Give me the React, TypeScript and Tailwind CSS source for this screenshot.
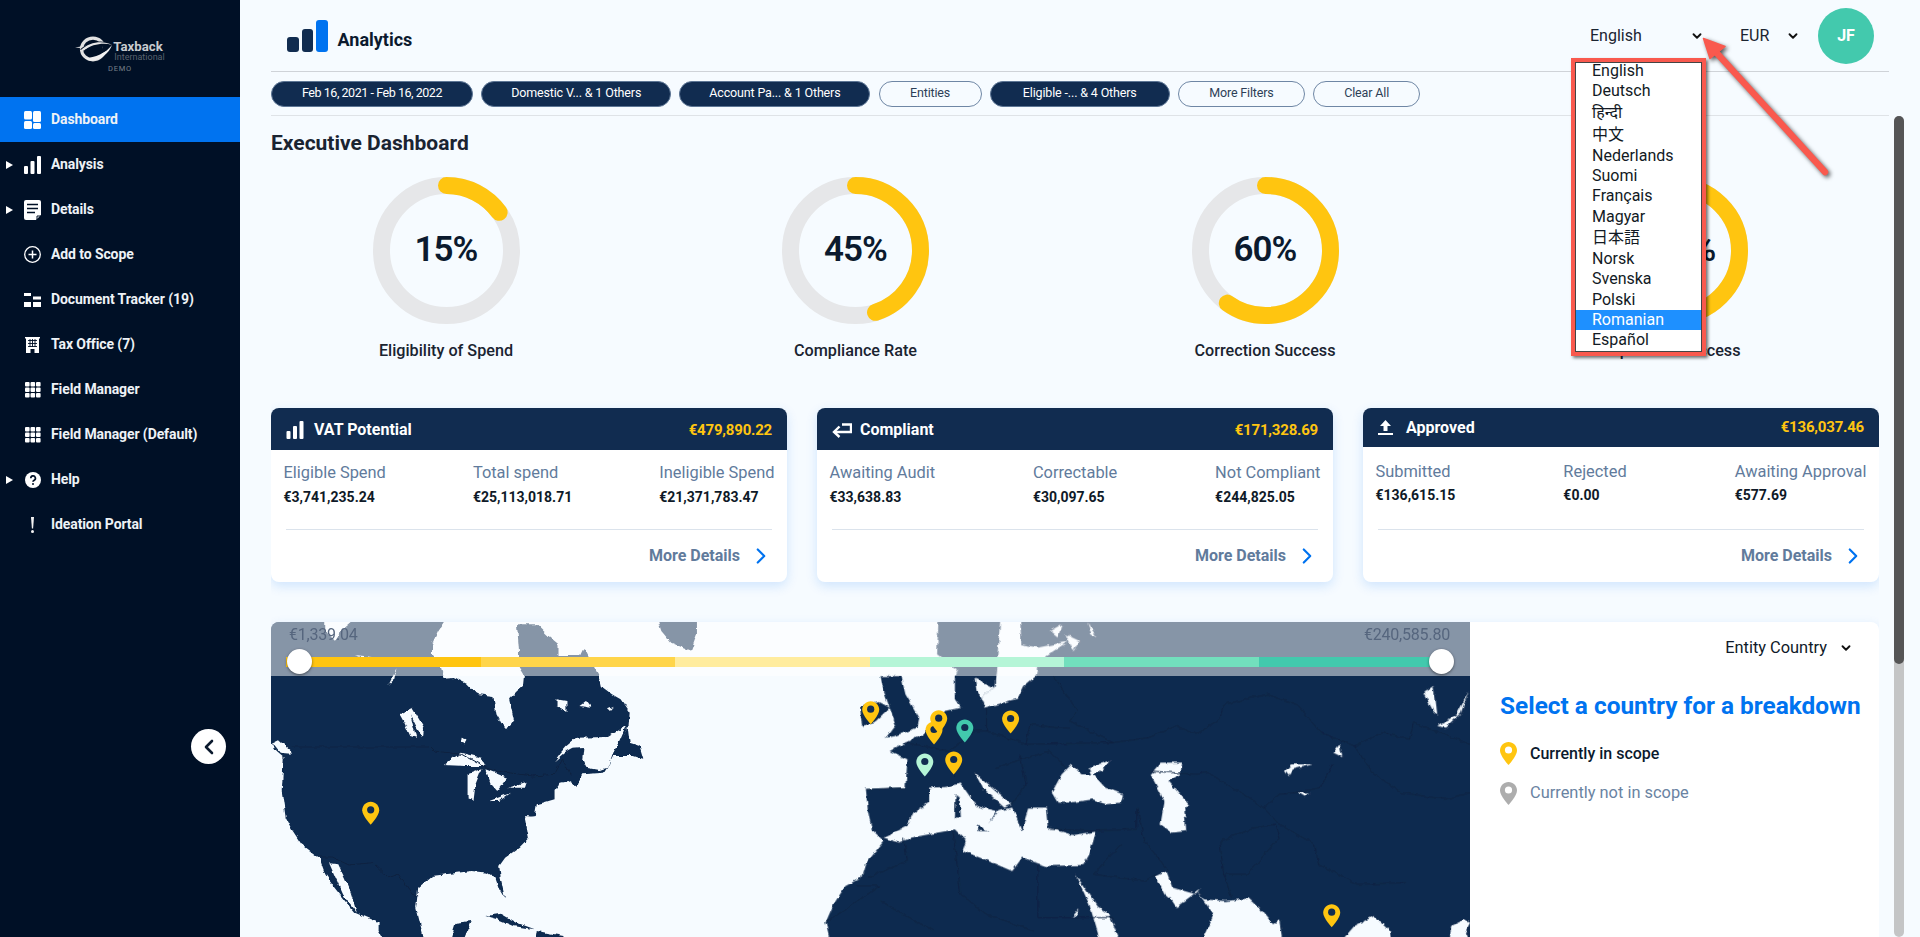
import React from "react";
import { ChevronDown, ChevronRight, ChevronLeft } from "lucide-react";

const NAVY = "#112c50";
const SEA = "#f6fbff";
const Z10 = "translate(260 610) scale(0.3954 0.3333)";
const Z11 = "translate(860 610) scale(0.3954 0.3333)";

const IconDash = () => (
  <svg width="17" height="18" viewBox="0 0 17 18" fill="#fff"><rect x="0" y="0" width="8" height="8.5" rx="1.5" /><rect x="0" y="10" width="8" height="8" rx="1.5" /><rect x="9" y="0" width="8" height="11" rx="1.5" /><rect x="9" y="12" width="8" height="6" rx="1.5" /></svg>
);
const IconBars = ({ w = 17, h = 18 }: { w?: number; h?: number }) => (
  <svg width={w} height={h} viewBox="0 0 17 18" fill="#fff"><rect x="0" y="10" width="4" height="8" rx="1" /><rect x="6.5" y="5" width="4" height="13" rx="1" /><rect x="13" y="0" width="4" height="18" rx="1" /></svg>
);
const IconDoc = () => (
  <svg width="17" height="20" viewBox="0 0 17 20"><path d="M2 0H15a2 2 0 0 1 2 2V15L12 20H2a2 2 0 0 1-2-2V2a2 2 0 0 1 2-2Z" fill="#fff" /><path d="M3 4.5H14M3 8.5H14M3 12.5H11" stroke="#001026" strokeWidth="1.6" /><path d="M13 20V16H17" stroke="#001026" strokeWidth="1" fill="none" /></svg>
);
const IconPlus = () => (
  <svg width="17" height="17" viewBox="0 0 17 17" fill="none" stroke="#fff" strokeWidth="1.3"><circle cx="8.5" cy="8.5" r="7.8" /><path d="M8.5 4.5V12.5M4.5 8.5H12.5" strokeWidth="1.5" /></svg>
);
const IconTrack = () => (
  <svg width="17" height="14" viewBox="0 0 17 14" fill="#fff"><rect x="0" y="0" width="7" height="3" /><rect x="9" y="3.5" width="8" height="3" /><rect x="0" y="9" width="7" height="5" /><rect x="9" y="9" width="8" height="5" /></svg>
);
const IconOffice = () => (
  <svg width="15" height="16" viewBox="0 0 15 16"><path d="M0 0H15V1.5H14V16H9.5V12H5.5V16H1V1.5H0Z" fill="#fff" /><path d="M3 3.5H12M3 6.5H12M3 9.5H12M5 2V10M7.5 2V10M10 2V10" stroke="#001026" strokeWidth="0.9" /></svg>
);
const IconGrid = () => (
  <svg width="16" height="16" viewBox="0 0 16 16" fill="#fff">
    {[0, 5.5, 11].flatMap((y) => [0, 5.5, 11].map((x) => <rect key={`${x}-${y}`} x={x} y={y} width="4.6" height="4.6" rx="1" />))}
  </svg>
);
const IconHelp = () => (
  <svg width="16" height="16" viewBox="0 0 16 16"><circle cx="8" cy="8" r="8" fill="#fff" /><path d="M5.8 6.2a2.3 2.3 0 1 1 3.4 2c-.8.5-1.2.9-1.2 1.6" fill="none" stroke="#001026" strokeWidth="1.7" /><circle cx="8" cy="12.1" r="1" fill="#001026" /></svg>
);
const IconBang = () => (
  <svg width="5" height="16" viewBox="0 0 5 16" fill="#f2f2f2"><path d="M1 0H4L3.1 11.5H1.9Z" /><circle cx="2.5" cy="14.4" r="1.5" /></svg>
);
const Tri = () => (
  <svg width="7" height="8" viewBox="0 0 7 8" fill="#fff"><path d="M0 0L7 4L0 8Z" /></svg>
);

const nav: { label: string; icon: React.ReactNode; tri?: boolean; active?: boolean }[] = [
  { label: "Dashboard", icon: <IconDash />, active: true },
  { label: "Analysis", icon: <IconBars />, tri: true },
  { label: "Details", icon: <IconDoc />, tri: true },
  { label: "Add to Scope", icon: <IconPlus /> },
  { label: "Document Tracker (19)", icon: <IconTrack /> },
  { label: "Tax Office (7)", icon: <IconOffice /> },
  { label: "Field Manager", icon: <IconGrid /> },
  { label: "Field Manager (Default)", icon: <IconGrid /> },
  { label: "Help", icon: <IconHelp />, tri: true },
  { label: "Ideation Portal", icon: <IconBang /> },
];

const Sidebar = () => (
  <aside className="relative w-[240px] h-full shrink-0 bg-[#001026] flex flex-col">
    <div className="h-[97px] flex flex-col items-center pt-[36px]">
      <div className="flex items-start">
        <svg width="38" height="26" viewBox="0 0 38 26" fill="none">
          <path d="M0 11.5L12 9.5L12 12.5Z" fill="#e6e6e6" />
          <ellipse cx="18" cy="13" rx="11.5" ry="10.8" stroke="#e2e2e2" strokeWidth="3.2" />
          <path d="M5 13.5C14 5 28 3 37 8.5C36 12 30 17 22 19C27 15 29 11 26 9.5C21 7.5 12 10 7 14Z" fill="#001026" />
          <path d="M6 14C14 6 28 4 37 9C29 6.5 17 8 9 14.5Z" fill="#e8e8e8" />
          <path d="M10 22C20 22 31 17 37 9C34 18 23 26 14 24.5Z" fill="#f0f0f0" />
        </svg>
        <div className="flex flex-col mt-[5px]">
          <span className="text-[13.2px] leading-[12px] font-bold text-[#c9ccd0]">Taxback</span>
          <span className="text-[9px] leading-[9px] text-[#59626e] ml-[1px]">International</span>
        </div>
      </div>
      <span className="text-[7.5px] leading-[8px] mt-[3px] tracking-[0.8px] text-[#78808a]">DEMO</span>
    </div>
    <nav className="flex flex-col">
      {nav.map((n) => (
        <div key={n.label} className={`relative h-[45px] flex items-center ${n.active ? "bg-[#0073f0]" : ""}`}>
          <span className="w-[24px] flex justify-start pl-[6px]">{n.tri ? <Tri /> : null}</span>
          <span className="w-[27px] flex justify-start"><span className="w-[17px] flex justify-center">{n.icon}</span></span>
          <span className="text-[14px] font-bold text-[#eef2f6] tracking-[-0.1px]">{n.label}</span>
        </div>
      ))}
    </nav>
    <button className="absolute left-[191px] top-[729px] w-[35px] h-[35px] rounded-full bg-white flex items-center justify-center">
      <ChevronLeft size={24} strokeWidth={2.6} color="#0b1a2e" />
    </button>
  </aside>
);

const Pill = ({ label, w, on, tight }: { label: string; w: string; on?: boolean; tight?: boolean }) => (
  <div className={`${w} h-[26px] rounded-full flex items-center justify-center border text-[12.5px] ${tight ? "tracking-[-0.45px]" : "tracking-[-0.15px]"} ${on ? "bg-[#112c50] text-white border-[#5d7695]" : "text-[#2d3f57] border-[#6f87a5]"}`}>{label}</div>
);

const Header = () => (
  <div className="mr-[31px] shrink-0">
    <div className="h-[72px] border-b border-[#cfd3d8] flex items-center pl-[16px] pr-[15px]">
      <div className="flex items-end gap-[2.5px] mb-[-1px] h-[32px]">
        <div className="w-[12px] h-[15px] rounded-[3px] bg-[#112c50]" />
        <div className="w-[11.5px] h-[23px] rounded-[3px] bg-[#112c50]" />
        <div className="w-[12px] h-[32px] rounded-[3px] bg-[#0073f0]" />
      </div>
      <span className="ml-[10px] mt-[8px] text-[18px] font-bold text-[#0b1a2e]">Analytics</span>
      <div className="flex-1" />
      <span className="text-[16px] text-[#1a2431] w-[100px] mt-[1px]">English</span>
      <ChevronDown size={14} strokeWidth={3.2} color="#111" />
      <span className="ml-[36px] text-[16px] text-[#1a2431] w-[46px] mt-[1px]">EUR</span>
      <ChevronDown size={14} strokeWidth={3.2} color="#111" />
      <div className="ml-[18px] w-[56px] h-[56px] rounded-full bg-[#43c9ad] flex items-center justify-center text-[16px] font-bold text-white">JF</div>
    </div>
    <div className="h-[44px] border-b border-[#dfe3e7] flex items-center gap-[8.2px]">
      <Pill label="Feb 16, 2021 - Feb 16, 2022" w="w-[202px]" on tight />
      <Pill label="Domestic V... & 1 Others" w="w-[190px]" on />
      <Pill label="Account Pa... & 1 Others" w="w-[191px]" on />
      <Pill label="Entities" w="w-[103px]" />
      <Pill label="Eligible -... & 4 Others" w="w-[180px]" on />
      <Pill label="More Filters" w="w-[127px]" />
      <Pill label="Clear All" w="w-[107px]" />
    </div>
  </div>
);

const Donut = ({ pct, label }: { pct: number; label: string }) => (
  <div className="w-[200px] flex flex-col items-center">
    <div className="grid place-items-center w-[147px] h-[147px]">
      <svg width="147" height="147" viewBox="0 0 147 147" className="col-start-1 row-start-1 -rotate-90">
        <circle cx="73.5" cy="73.5" r="65" fill="none" stroke="#e6e7e9" strokeWidth="17" />
        <circle cx="73.5" cy="73.5" r="65" fill="none" stroke="#ffc510" strokeWidth="17" strokeLinecap="round" pathLength={100} strokeDasharray={`${pct} 100`} />
      </svg>
      <span className="col-start-1 row-start-1 text-[35px] font-semibold text-[#0b1a2e] tracking-[-1px]">{pct}%</span>
    </div>
    <span className="mt-[15px] leading-[24px] text-[16.2px] font-medium text-[#1a2431] whitespace-nowrap">{label}</span>
  </div>
);

const Stat = ({ label, value, tight }: { label: string; value: string; tight?: boolean }) => (
  <div className="flex flex-col">
    <span className="text-[16.4px] leading-[20px] text-[#617b9c] whitespace-nowrap">{label}</span>
    <span className={`text-[14px] leading-[20px] font-bold text-[#0f1a28] ${tight ? "mt-[3px]" : "mt-[4px]"}`}>{value}</span>
  </div>
);

const Card = ({ icon, gap, title, total, stats, tight }: { icon: React.ReactNode; gap: string; title: string; total: string; stats: [string, string][]; tight?: boolean }) => (
  <div className="w-[516px] h-[174px] rounded-[8px] bg-white shadow-[0_4px_12px_rgba(0,115,240,0.16)] flex flex-col overflow-hidden">
    <div className={`${tight ? "h-[39px]" : "h-[42px] pt-[2px]"} bg-[#112c50] flex items-center pl-[15px] pr-[15px] shrink-0`}>
      {icon}
      <span className={`${gap} text-[16px] font-bold text-white`}>{title}</span>
      <span className="ml-auto text-[15px] font-bold text-[#ffc510] tracking-[-0.2px]">{total}</span>
    </div>
    <div className={`flex justify-between px-[12.5px] ${tight ? "pt-[15px]" : "pt-[13px]"}`}>
      {stats.map(([l, v]) => <Stat key={l} label={l} value={v} tight={tight} />)}
    </div>
    <div className="mt-auto mx-[15px] border-t border-[#dbe3ec]" />
    <div className="h-[52px] flex items-center justify-end pr-[13px] shrink-0">
      <span className="text-[16px] font-bold text-[#617b9c]">More Details</span>
      <ChevronRight size={26} strokeWidth={2} color="#0073f0" className="ml-[8px]" />
    </div>
  </div>
);

const Pin = ({ x, y, color, hole = NAVY }: { x: number; y: number; color: string; hole?: string }) => (
  <g transform={`translate(${x - 8.5} ${y - 11.5})`}>
    <path d="M8.5 0C3.8 0 0 3.8 0 8.5 0 14 8.5 23 8.5 23S17 14 17 8.5C17 3.8 13.2 0 8.5 0Z" fill={color} />
    <circle cx="8.5" cy="8" r="3.6" fill={hole} />
  </g>
);

const Poly = ({ p, c = NAVY }: { p: string; c?: string }) => <polygon points={p} fill={c} />;

const WorldMap = () => (
  <svg viewBox="271 621 1199 316" width="1199" height="316" className="block">
    <defs>
      <filter id="rough" filterUnits="userSpaceOnUse" x="240" y="590" width="1270" height="380">
        <feTurbulence type="fractalNoise" baseFrequency="0.16" numOctaves="2" seed="4" />
        <feDisplacementMap in="SourceGraphic" scale="4.5" xChannelSelector="R" yChannelSelector="G" />
      </filter>
    </defs>
    <rect x="271" y="621" width="1199" height="316" fill={SEA} />
    <g filter="url(#rough)">
      <g transform={Z10}>
        <Poly p="-30,-20 470,-20 465,33 450,60 435,100 435,135 458,170 465,200 490,198 520,215 540,240 555,250 590,255 598,310 610,335 625,355 642,325 630,265 650,240 665,225 668,190 655,165 655,120 650,40 700,40 730,75 755,100 755,135 810,135 820,110 832,140 855,190 862,225 890,250 912,265 935,305 932,345 890,440 878,470 870,485 815,490 800,525 780,510 760,515 745,540 745,565 715,575 700,580 695,615 670,620 680,680 655,710 620,740 605,765 610,810 620,865 605,835 595,800 575,785 535,780 500,785 435,795 400,830 395,890 420,1010 325,1010 300,960 300,935 240,905 215,870 185,825 165,790 150,740 105,700 80,655 65,620 55,540 60,440 40,420 28,395 -30,380" />
        <Poly c={SEA} p="745,450 760,425 775,405 800,380 880,378 925,345 905,400 890,435 878,470 860,478 825,470 815,445 818,408 790,410 775,420" />
        <Poly p="930,350 935,395 960,405 970,445 945,435 890,435 905,400" />
        <Poly c={SEA} p="820,495 870,487 815,525 802,520" />
        <Poly c={SEA} p="165,25 240,25 210,55 190,90 165,60" />
        <Poly c={SEA} p="240,132 285,138 260,140" />
        <Poly c={SEA} p="325,222 345,175 340,205" />
        <Poly c={SEA} p="353,310 385,290 415,350 412,378 395,345 380,310 395,380 380,375 365,335" />
        <Poly c={SEA} p="510,380 522,385 518,400 508,395" />
        <Poly c={SEA} p="465,462 490,440 510,425 560,440 570,465 520,465" />
        <Poly c={SEA} p="525,490 560,475 545,520 540,570 525,560" />
        <Poly c={SEA} p="570,475 625,500 600,540 585,520" />
        <Poly c={SEA} p="580,570 635,545 605,570" />
        <Poly c={SEA} p="628,530 675,512 670,530" />
        <Poly c={SEA} p="750,265 775,270 775,300 750,285" />
        <Poly c={SEA} p="808,285 825,270 838,290" />
        <Poly c={SEA} p="880,295 895,287 885,300" />
        <Poly c={SEA} p="30,395 48,385 75,415 78,428 50,425" />
        <Poly c={SEA} p="175,757 198,760 225,830 245,905 210,850" />
        <Poly c={SEA} p="670,615 690,618 680,645" />
        <Poly p="1005,25 1105,25 1105,70 1090,120 1040,95 1015,60" />
        <Poly p="570,915 610,908 650,935 695,955 640,945 600,925" />
        <Poly p="478,1000 495,935 535,930 510,1000" />
        <Poly p="700,960 770,975 770,1000 695,1000" />
        <polyline points="80,408 430,408 440,420 510,430 570,470 595,480 690,495 745,490 765,445 785,490" fill="none" stroke="#0a2140" strokeWidth="1" vectorEffect="non-scaling-stroke" />
        <polyline points="150,738 180,738 225,762 285,755 325,800 350,790 385,850 400,855" fill="none" stroke="#0a2140" strokeWidth="1" vectorEffect="non-scaling-stroke" />
      </g>
      <g transform={Z11}>
        <Poly p="200,-20 1600,-20 1600,1010 -72,1010 -87,935 -67,880 -37,825 3,800 13,760 60,690 30,655 20,600 15,535 65,532 115,530 120,445 75,420 115,395 165,365 215,300 255,290 240,265 240,195 245,175 195,130" />
        <Poly p="52,195 105,195 110,225 115,250 150,320 145,350 90,375 65,380 90,340 75,290 60,240" />
        <Poly p="0,285 45,270 75,290 40,330 5,345" />
        <Poly c={SEA} p="355,25 405,25 408,100 450,110 525,92 515,100 470,135 448,170 445,195 415,225 400,262 315,290 305,260 340,230 345,170" />
        <Poly c={SEA} p="290,200 340,230 305,260 295,240" />
        <Poly c={SEA} p="480,60 510,40 500,80" />
        <Poly c={SEA} p="520,70 555,90 540,120" />
        <Poly c={SEA} p="575,35 600,80 585,70" />
        <Poly c={SEA} p="60,680 120,645 135,605 175,575 175,530 215,528 255,518 295,585 345,600 325,640 350,600 385,590 410,660 425,590 470,590 475,650 540,672 597,662 580,730 565,762 470,765 410,740 385,780 345,760 262,720 270,690 240,655 130,680 100,695" />
        <Poly p="242,550 252,555 255,620 240,620" />
        <Poly p="295,640 325,660 300,660" />
        <Poly c={SEA} p="290,485 305,500 385,580 365,590 310,530" />
        <Poly c={SEA} p="485,545 510,490 535,460 560,490 590,490 620,530 665,550 660,575 620,580 590,565 530,575 500,575" />
        <Poly c={SEA} p="578,470 633,448 610,480 585,492" />
        <Poly c={SEA} p="735,490 760,455 815,455 810,490 780,510 835,585 820,590 825,660 790,665 760,640 770,570" />
        <Poly c={SEA} p="545,790 600,885 630,910 660,1000 610,1000 580,880" />
        <Poly c={SEA} p="748,795 775,780 790,830 850,850 860,835 800,888 790,870 770,850" />
        <Poly c={SEA} p="850,838 870,865 925,870 985,862 1010,890 1045,940 1060,925 1070,1000 860,1000 895,910" />
        <Poly c={SEA} p="1210,1000 1250,945 1300,915 1340,960 1345,1000" />
        <Poly c={SEA} p="1490,1000 1495,945 1530,925 1543,935 1530,965 1543,1000" />
        <Poly c={SEA} p="1075,480 1090,460 1145,460 1095,475 1085,495" />
        <Poly c={SEA} p="1197,425 1213,400 1220,438" />
        <Poly c={SEA} p="1108,545 1135,545 1125,557" />
        <Poly c={SEA} p="1460,345 1510,310 1540,240 1520,305 1480,350" />
        <Poly c={SEA} p="1425,245 1450,225 1455,260 1460,310 1450,300" />
        <Poly c={SEA} p="535,920 555,892 550,910" />
        <g fill="none" stroke="#0a2140" strokeWidth="1">
          {[
            "490,195 550,300 530,330 640,395 730,380 800,345 850,370 910,325 920,280 1030,250 1110,285 1165,365 1250,405 1320,365 1390,385 1400,335 1543,400",
            "735,480 850,490 880,485 985,560 1020,590 1060,550 1100,545 1165,530 1195,460",
            "1020,590 1060,640 1150,700 1160,760 1260,820 1380,815",
            "1250,405 1300,490 1370,545 1480,565 1543,545",
            "700,590 720,690 780,780",
            "910,690 920,790 940,860",
            "910,690 1000,650 1050,640 1060,680 980,790 920,790",
            "480,655 590,660 700,655 700,590",
            "235,660 255,850 320,910 440,960",
            "110,680 120,750 20,800",
            "450,760 450,920 640,920",
            "-87,935 50,825 -10,825",
            "320,290 320,360 290,360 225,420",
            "320,360 420,400 430,340 530,355",
            "420,400 640,395",
            "340,470 480,420 520,470",
            "115,395 225,420 240,500",
            "405,430 420,520 385,580",
            "15,535 115,530",
            "660,700 590,790 720,810 750,790",
            "52,870 185,960",
          ].map((p) => <polyline key={p} points={p} vectorEffect="non-scaling-stroke" />)}
        </g>
      </g>
    </g>
    <Pin x={370.7} y={812.3} color="#ffc510" />
    <Pin x={870.7} y={711.7} color="#ffc510" />
    <Pin x={934} y={732} color="#ffc510" />
    <Pin x={938.7} y={720.7} color="#ffc510" />
    <Pin x={964.8} y={730} color="#42c9ad" />
    <Pin x={1010.6} y={721} color="#ffc510" />
    <Pin x={924.8} y={764} color="#b5f5d7" />
    <Pin x={953.7} y={762} color="#ffc510" />
    <Pin x={1331.7} y={914.7} color="#ffc510" />
  </svg>
);

const LegendPin = ({ color }: { color: string }) => (
  <svg width="17" height="23" viewBox="0 0 17 23"><path d="M8.5 0C3.8 0 0 3.8 0 8.5 0 14 8.5 23 8.5 23S17 14 17 8.5C17 3.8 13.2 0 8.5 0Z" fill={color} /><circle cx="8.5" cy="8" r="3.6" fill="#fff" /></svg>
);

const Handle = ({ cls }: { cls: string }) => (
  <div className={`absolute top-[27px] w-[25px] h-[25px] rounded-full bg-white shadow-[0_1px_3px_rgba(0,0,0,0.5)] ${cls}`} />
);

const MapPanel = () => (
  <div className="mt-[40px] flex h-[340px] rounded-t-[8px] overflow-hidden bg-white shadow-[0_4px_12px_rgba(0,115,240,0.16)]">
    <div className="relative w-[1199px] shrink-0">
      <WorldMap />
      <div className="absolute top-0 left-0 right-0 h-[54px] bg-white/50">
        <div className="flex justify-between pl-[18px] pr-[20px] h-[26px] items-center text-[16px] text-[#56667e] tracking-[-0.2px]">
          <span>€1,339.04</span>
          <span>€240,585.80</span>
        </div>
        <div className="ml-[15px] mt-[9px] w-[1167px] h-[10px] flex">
          {["bg-[#ffc510]", "bg-[#ffd54a]", "bg-[#ffec9e]", "bg-[#b5f5d7]", "bg-[#72dfbd]", "bg-[#42c9ad]"].map((c) => (
            <div key={c} className={`flex-1 ${c}`} />
          ))}
        </div>
        <Handle cls="left-[16px]" />
        <Handle cls="left-[1158px]" />
      </div>
    </div>
    <div className="flex-1 flex flex-col pl-[30px]">
      <div className="flex items-center justify-end pr-[26px] h-[52px]">
        <span className="text-[16.4px] text-[#0f1a28]">Entity Country</span>
        <ChevronDown size={14} strokeWidth={3.2} color="#111" className="ml-[12px]" />
      </div>
      <div className="mt-[17px] text-[24.4px] leading-[30px] font-bold text-[#0073f0] whitespace-nowrap">Select a country for a breakdown</div>
      <div className="mt-[21px] flex items-center gap-[13px] h-[23px]">
        <LegendPin color="#ffc510" />
        <span className="text-[16px] font-medium text-[#0b1a2e]">Currently in scope</span>
      </div>
      <div className="mt-[17px] flex items-center gap-[13px] h-[23px]">
        <LegendPin color="#adadad" />
        <span className="text-[16.4px] text-[#6a83a2]">Currently not in scope</span>
      </div>
    </div>
  </div>
);

const Body = () => (
  <div className="flex flex-1 min-h-0 pr-[16px]">
    <div className="w-[1608px] shrink-0 pt-[15px] overflow-hidden">
      <h1 className="text-[21px] leading-[24px] font-bold text-[#1a2431]">Executive Dashboard</h1>
      <div className="mt-[22px] flex gap-[209.5px] pl-[75px]">
        <Donut pct={15} label="Eligibility of Spend" />
        <Donut pct={45} label="Compliance Rate" />
        <Donut pct={60} label="Correction Success" />
        <Donut pct={100} label="Optimum Success" />
      </div>
      <div className="mt-[45px] flex gap-[30px]">
        <Card icon={<IconBars w={18} h={18} />} gap="ml-[10px]" title="VAT Potential" total="€479,890.22" stats={[["Eligible Spend", "€3,741,235.24"], ["Total spend", "€25,113,018.71"], ["Ineligible Spend", "€21,371,783.47"]]} />
        <Card
          icon={<svg width="20" height="15" viewBox="0 0 20 15" fill="none" stroke="#fff" strokeWidth="2.4"><path d="M10 1.5H19V9H2.5" /><path d="M7.5 3.5L2 9l5.5 5" /></svg>}
          gap="ml-[8px]" title="Compliant" total="€171,328.69" stats={[["Awaiting Audit", "€33,638.83"], ["Correctable", "€30,097.65"], ["Not Compliant", "€244,825.05"]]} />
        <Card tight
          icon={<svg width="15" height="15" viewBox="0 0 15 15" fill="#fff"><path d="M7.5 0L13 6H9.5V11H5.5V6H2Z" /><rect x="0" y="13" width="15" height="2" /></svg>}
          gap="ml-[13px]" title="Approved" total="€136,037.46" stats={[["Submitted", "€136,615.15"], ["Rejected", "€0.00"], ["Awaiting Approval", "€577.69"]]} />
      </div>
      <MapPanel />
    </div>
    <div className="ml-[15px] w-[10px] h-full rounded-full bg-[#c4c5c6]">
      <div className="h-[548px] rounded-full bg-[#555556]" />
    </div>
  </div>
);

const langs: { t: string; cls: string }[] = [
  { t: "English", cls: "h-[20.3px]" },
  { t: "Deutsch", cls: "h-[20.3px]" },
  { t: "हिन्दी", cls: "h-[22px]" },
  { t: "中文", cls: "h-[22px]" },
  { t: "Nederlands", cls: "h-[20.3px]" },
  { t: "Suomi", cls: "h-[20.3px]" },
  { t: "Français", cls: "h-[20.3px]" },
  { t: "Magyar", cls: "h-[20.3px]" },
  { t: "日本語", cls: "h-[22px]" },
  { t: "Norsk", cls: "h-[20.3px]" },
  { t: "Svenska", cls: "h-[20.3px]" },
  { t: "Polski", cls: "h-[20.3px]" },
  { t: "Romanian", cls: "h-[20.3px] bg-[#1e90ff] text-white" },
  { t: "Español", cls: "h-[20.3px]" },
];

const Dropdown = () => (
  <div className="absolute left-[1571px] top-[58px] w-[135px] h-[298px] border-4 border-[#f9594e] bg-white shadow-[2px_2px_3px_rgba(0,0,0,0.55)] overflow-hidden">
    <div className="h-full border border-[#444] overflow-hidden">
      <div className="mt-[-2px]">
        {langs.map((l) => (
          <div key={l.t} className={`${l.cls} pl-[16px] flex items-center text-[16px] leading-[20px] text-[#121a24] font-['Roboto','Noto_Sans_CJK_JP','Noto_Sans_Devanagari',sans-serif]`}>{l.t}</div>
        ))}
      </div>
    </div>
  </div>
);

const Arrow = () => (
  <svg className="absolute left-[1690px] top-[28px] drop-shadow-[2px_2px_2px_rgba(0,0,0,0.65)]" width="150" height="155" viewBox="1690 28 150 155" fill="#f9594e">
    <path d="M1825 172L1714 50" stroke="#f9594e" strokeWidth="6.5" strokeLinecap="round" />
    <path d="M1703.5 38.5L1725 46.5L1710 58.5Z" stroke="#f9594e" strokeWidth="1.5" strokeLinejoin="round" />
  </svg>
);

export default function App() {
  return (
    <div className="relative flex w-[1920px] h-[937px] overflow-hidden bg-[#f6fbff] font-['Roboto',sans-serif]">
      <Sidebar />
      <main className="flex-1 min-w-0 flex flex-col pl-[31px]">
        <Header />
        <Body />
      </main>
      <Dropdown />
      <Arrow />
    </div>
  );
}
